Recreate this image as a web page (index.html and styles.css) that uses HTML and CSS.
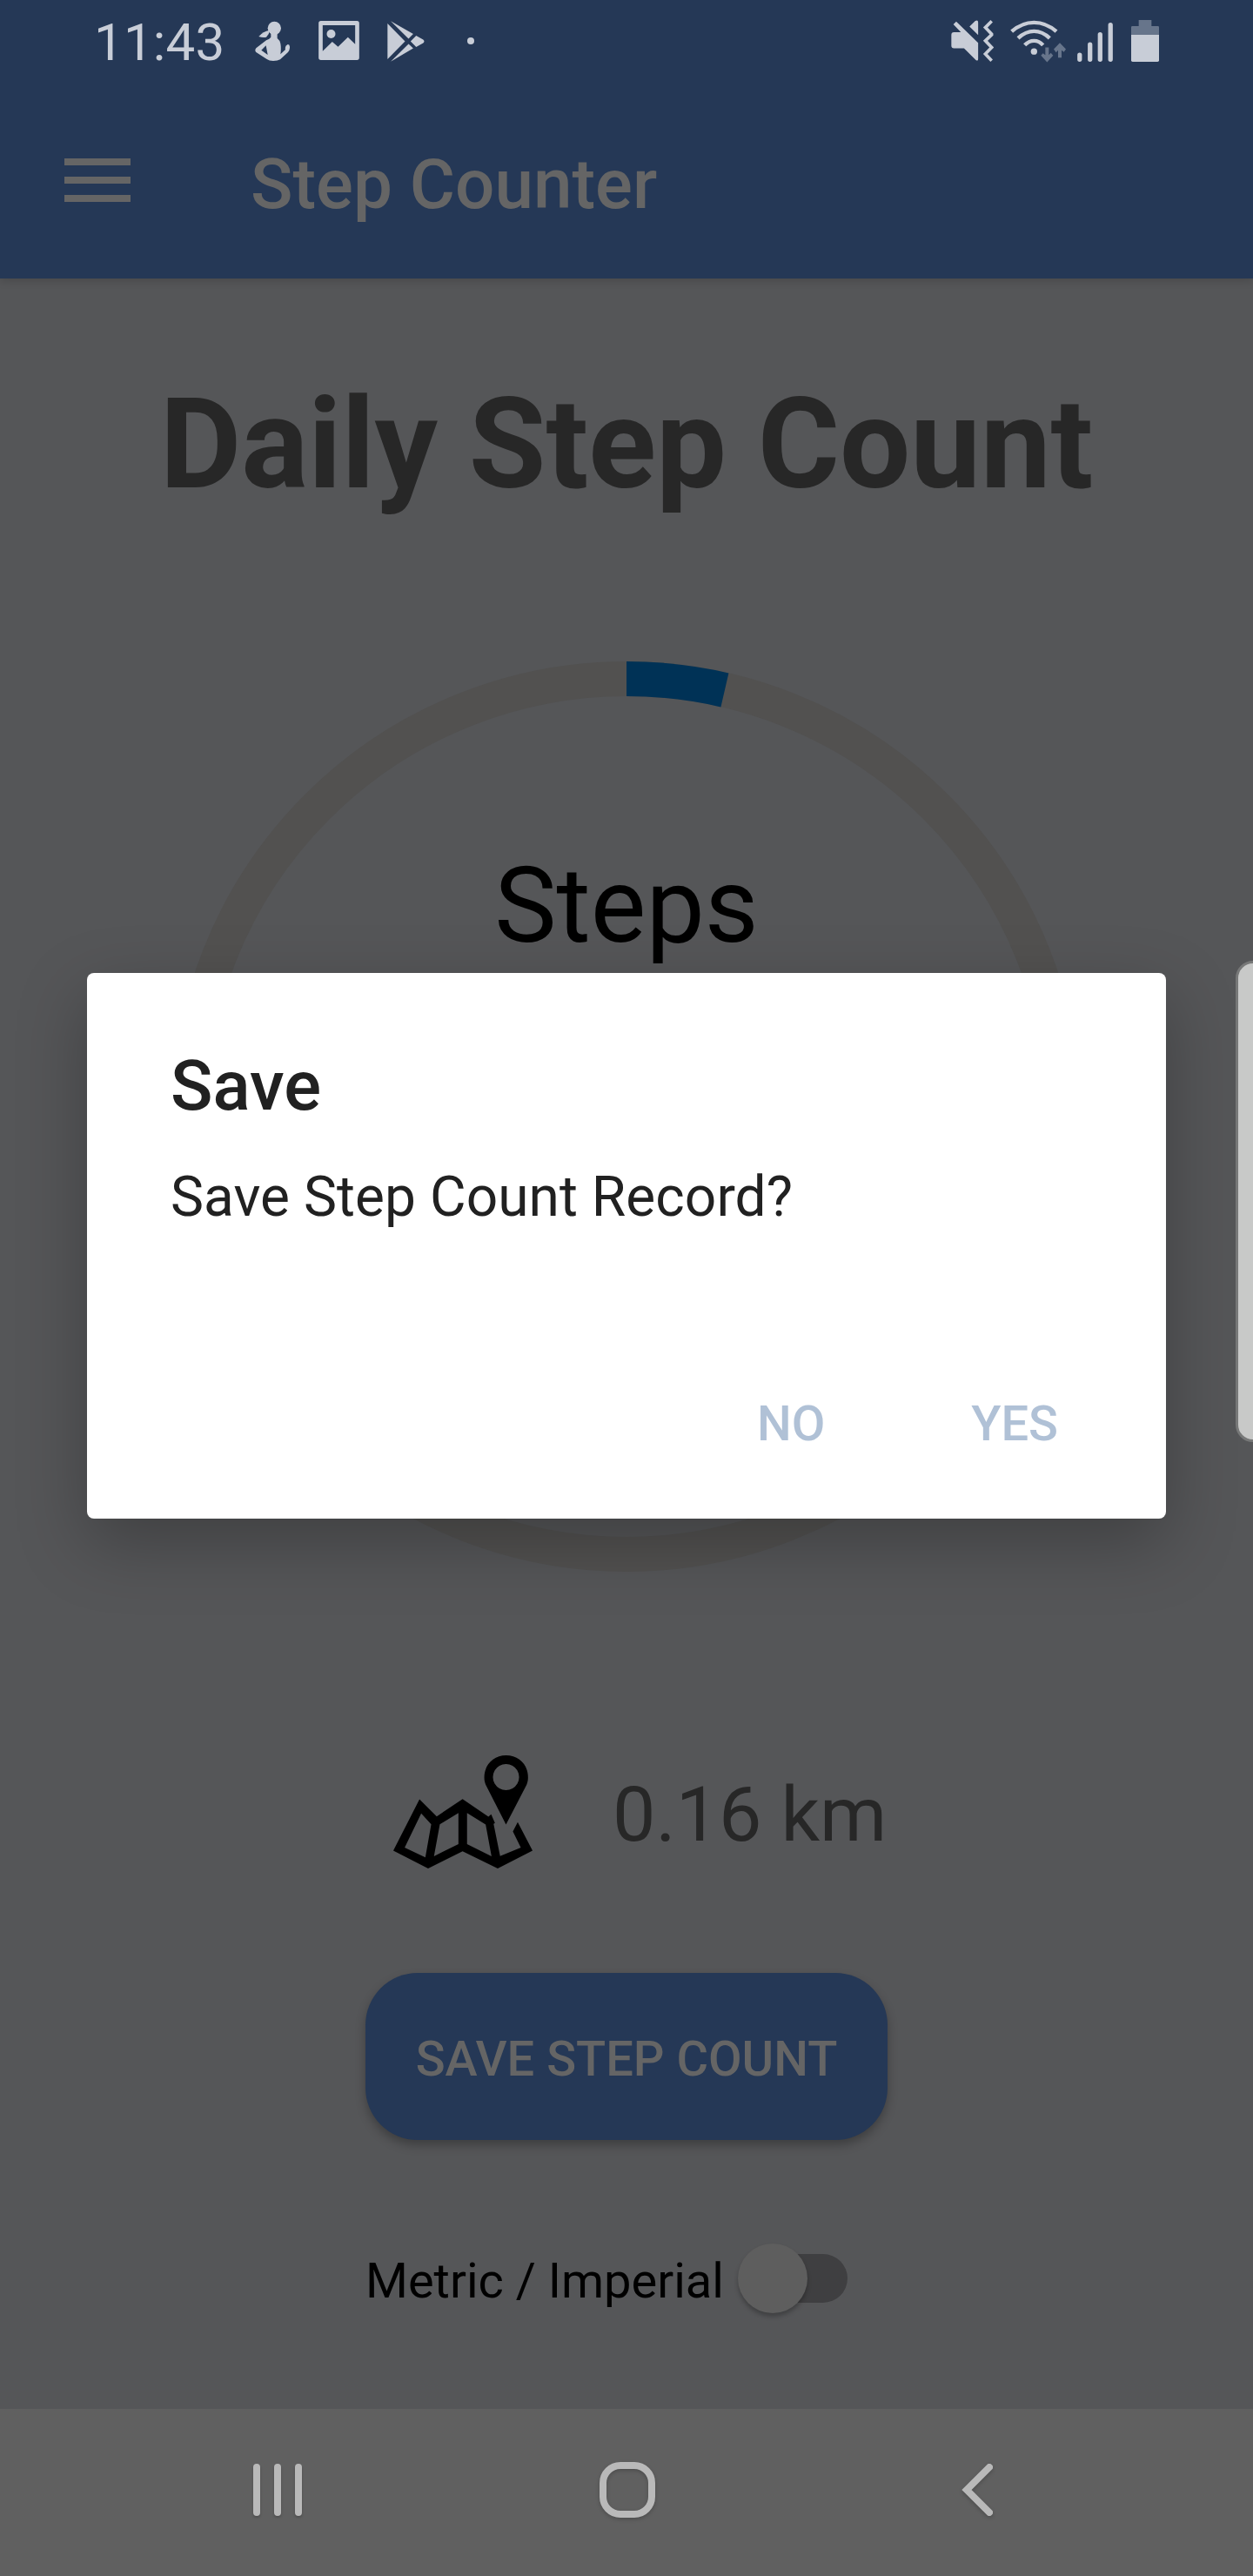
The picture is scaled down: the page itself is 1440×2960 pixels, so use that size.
FILE: index.html
```html
<!DOCTYPE html>
<html lang="en">
<head>
<meta charset="utf-8">
<title>Step Counter</title>
<link rel="stylesheet" href="styles.css">
</head>
<body>
<div class="screen">
  <header class="status">
    <span class="time">11:43</span>
    <svg class="ic-fit" viewBox="699 72 120 138"><circle cx="766" cy="97" r="23"/><path d="M750 104 Q726 108 712 126 Q726 131 738 128 Q748 119 750 104Z"/><path fill-rule="evenodd" d="M754 112H776V132Q786 140 787 150Q790 166 787 187L804 171Q801 158 812 153Q820 153 819 165Q818 175 813 180L786 205Q778 210 762 210Q748 210 740 204L703 180Q697 173 703 166L738 139Q750 134 754 128ZM737 157L721 173L743 189Z"/></svg>
    <svg class="ic-image" viewBox="917 72 140 135"><path fill-rule="evenodd" d="M925 72H1049Q1057 72 1057 80V199Q1057 207 1049 207H925Q917 207 917 199V80Q917 72 925 72ZM931 87V176L964 144L984 161L1018 128L1043 152V87Z"/><circle cx="960" cy="117" r="15"/></svg>
    <svg class="ic-play" viewBox="1154 71 128 140"><path d="M1155 80L1215 141L1155 202ZM1166 72L1243 116L1227 132ZM1253 122L1277 135Q1284 141 1277 147L1253 160L1234 141ZM1227 150L1243 165L1166 210Z"/></svg>
    <i class="more"></i>
    <div class="status-right">
      <svg class="ic-mute" viewBox="99 69 146 145"><path d="M108 111H132L106 84L116 74L192 148V204Q192 213 184 208L143 167H108Q99 167 99 158V120Q99 111 108 111ZM162 92L182 72Q192 67 192 77V121Z"/><path class="line" d="M239 73L217 95L239 118V120L217 141L239 164L217 187L239 210" stroke-width="11"/></svg>
      <svg class="ic-wifi" viewBox="303 68 192 146"><g class="line" stroke-width="13"><path d="M308 107Q343 76 385 76Q427 76 462 107M330 130Q356 106 385 106Q414 106 439 130M353 154Q367 139 385 139Q403 139 416 154"/></g><circle cx="385" cy="176" r="11"/><path class="dim" d="M424 162H436V188L443 181L451 190L430 213L409 190L416 182L424 188ZM468 197V172L461 179L453 168L474 146L495 168L488 178L480 172V197Z"/></svg>
      <svg class="ic-signal" viewBox="534 77 123 136"><path d="M542 189V205M578 153V205M613 118V205M649 85V205" class="line" stroke-linecap="round" stroke-width="16"/></svg>
      <svg class="ic-battery" viewBox="720 69 96 144"><path class="dim" d="M720 120V94Q720 90 724 90H746V69H790V90H812Q816 90 816 94V120Z"/><path d="M720 120H816V208Q816 213 811 213H725Q720 213 720 208Z"/></svg>
    </div>
  </header>
  <div class="appbar">
    <div class="menu"><i></i><i></i><i></i></div>
    <div class="title">Step Counter</div>
  </div>
  <main>
    <h1>Daily Step Count</h1>
    <div class="gauge">
      <svg viewBox="0 0 1046 1046"><circle cx="523" cy="523" r="503" fill="none" stroke="#525150" stroke-width="40"/><path d="M523 0A523 523 0 0 1 640.4 13.4L631.4 52.4A483 483 0 0 0 523 40Z" fill="#003256"/></svg>
      <span>Steps</span>
    </div>
    <div class="distance">
      <svg viewBox="82 81 404 389" preserveAspectRatio="none"><path fill-rule="evenodd" d="M409 81C447 81 473 113 473 157C473 168 471 178 466 189L409 319L353 189C348 178 346 168 346 157C346 113 373 81 409 81ZM409 111A38 45 0 1 0 409.1 111Z"/><path fill-rule="evenodd" d="M158 232L208 291L283 231L358 292L366 284L377 314L373 317L392 427L452 398L429 343L443 311L486 409L385 470L283 411L183 470L82 409ZM163 281L115 398L175 432L192 318ZM271 279L217 318L200 428L271 386ZM296 279V386L367 428L350 319Z"/></svg>
      <span>0.16 km</span>
    </div>
    <button class="save">SAVE STEP COUNT</button>
    <div class="units"><span>Metric / Imperial</span><div class="switch"><i></i></div></div>
  </main>
  <nav>
    <div class="recents"><i></i><i></i><i></i></div>
    <div class="home"></div>
    <svg class="back" viewBox="0 0 36 60"><path d="M32 4L6 30L32 56"/></svg>
  </nav>
  <section class="dialog">
    <h2>Save</h2>
    <p>Save Step Count Record?</p>
    <div class="actions"><span>NO</span><span>YES</span></div>
  </section>
  <div class="edge"></div>
</div>
</body>
</html>
```
FILE: styles.css
```css
* { box-sizing: border-box; margin: 0; padding: 0; }
body { font-family: Roboto, "Liberation Sans", sans-serif; background: #555658; }
svg, i { display: block; flex: none; }
span, h1, h2, p, .title { white-space: nowrap; }
.screen { position: relative; width: 1440px; height: 2960px; overflow: hidden; display: flex; flex-direction: column; }

.status { position: relative; z-index: 2; height: 96px; background: #253856; display: flex; align-items: flex-start; padding: 23px 108px 0 108px; color: #c8cdd7; fill: #c8cdd7; }
.time { font-size: 60px; line-height: 52px; width: 185px; letter-spacing: .2px; }
.ic-fit { width: 40px; height: 46px; margin-top: 1px; }
.ic-image { width: 47px; height: 45px; margin: 1px 0 0 33px; }
.ic-play { width: 43px; height: 47px; margin: 1px 0 0 32px; }
.more { width: 8px; height: 8px; border-radius: 50%; background: #c8cdd7; margin: 20px 0 0 49px; }
.status-right { display: flex; margin-left: auto; }
.line { fill: none; stroke: #c8cdd7; }
.dim { fill: #67758b; }
.ic-mute { width: 49px; height: 48px; }
.ic-wifi { width: 64px; height: 49px; margin-left: 19px; }
.ic-signal { width: 41px; height: 45px; margin: 3px 0 0 13px; }
.ic-battery { width: 32px; height: 48px; margin-left: 21px; }

.appbar { height: 224px; background: #253856; display: flex; padding: 64px 0 0 74px; box-shadow: 0 2px 10px rgba(0,0,0,.18); z-index: 1; color: #656565; }
.menu { width: 76px; margin: 22px 138px 0 0; display: flex; flex-direction: column; gap: 13px; }
.menu i { height: 8px; background: #656565; }
.title { font-size: 80px; font-weight: 500; line-height: 104px; }

main { height: 2448px; background: #555658; display: flex; flex-direction: column; align-items: center; padding-top: 107px; }
h1 { font-size: 144px; font-weight: 700; line-height: 168px; color: #272727; }
.gauge { margin-top: 165px; width: 1046px; height: 1046px; display: grid; justify-items: center; }
.gauge > * { grid-area: 1 / 1; }
.gauge svg { width: 1046px; height: 1046px; }
.gauge span { font-size: 120px; line-height: 140px; margin-top: 211px; color: #000; }
.distance { align-self: flex-start; margin: 211px 0 0 452px; height: 136px; display: flex; gap: 92px; }
.distance svg { width: 160px; height: 130px; }
.distance span { font-size: 88px; line-height: 136px; color: #272727; }
.save { margin-top: 114px; width: 600px; height: 192px; border: 0; border-radius: 60px; background: #253856; color: #656565; font: 500 56px/186px Roboto, sans-serif; padding-top: 6px; box-shadow: 0 6px 12px rgba(0,0,0,.28); white-space: nowrap; }
.units { align-self: flex-start; margin: 119px 0 0 420px; display: flex; width: 554px; justify-content: space-between; }
.units span { font-size: 56px; line-height: 86px; color: #000; }
.switch { width: 126px; height: 56px; margin-top: 12px; border-radius: 28px; background: linear-gradient(90deg, transparent 40px, #3f3f41 40px); }
.switch i { width: 80px; height: 80px; border-radius: 50%; background: #5e5e5e; margin-top: -12px; box-shadow: 0 4px 5px rgba(0,0,0,.25); }

nav { height: 192px; background: #606060; display: flex; align-items: flex-start; padding: 62px 299px 0 291px; justify-content: space-between; }
.recents { display: flex; gap: 16px; padding-top: 1px; }
.recents i { width: 8px; height: 60px; border-radius: 4px; background: #b9b9b9; box-shadow: 0 2px 3px rgba(0,0,0,.2); }
.home { width: 64px; height: 64px; border: 8px solid #b9b9b9; border-radius: 24px; margin: -1px 10px 0 0; filter: drop-shadow(0 2px 2px rgba(0,0,0,.2)); }
.back { width: 36px; height: 60px; margin-top: 1px; fill: none; stroke: #b9b9b9; stroke-width: 8; stroke-linecap: round; filter: drop-shadow(0 2px 2px rgba(0,0,0,.2)); }

.dialog { position: absolute; left: 100px; top: 1118px; width: 1240px; height: 627px; z-index: 2; background: #fff; border-radius: 8px; padding: 80px 124px 0 96px; color: #212121; box-shadow: 0 28px 80px rgba(0,0,0,.26); }
h2 { font-size: 80px; font-weight: 500; line-height: 100px; }
.dialog p { font-size: 64px; line-height: 76px; margin-top: 40px; letter-spacing: .05px; }
.actions { display: flex; justify-content: flex-end; gap: 168px; margin-top: 189px; font-size: 56px; font-weight: 500; line-height: 66px; color: #b0c1d6; }
.edge { position: absolute; z-index: 3; left: 1420px; top: 1104px; width: 40px; height: 553px; border-radius: 24px; background: #c8c9c8; border: 3px solid #777878; }
```
